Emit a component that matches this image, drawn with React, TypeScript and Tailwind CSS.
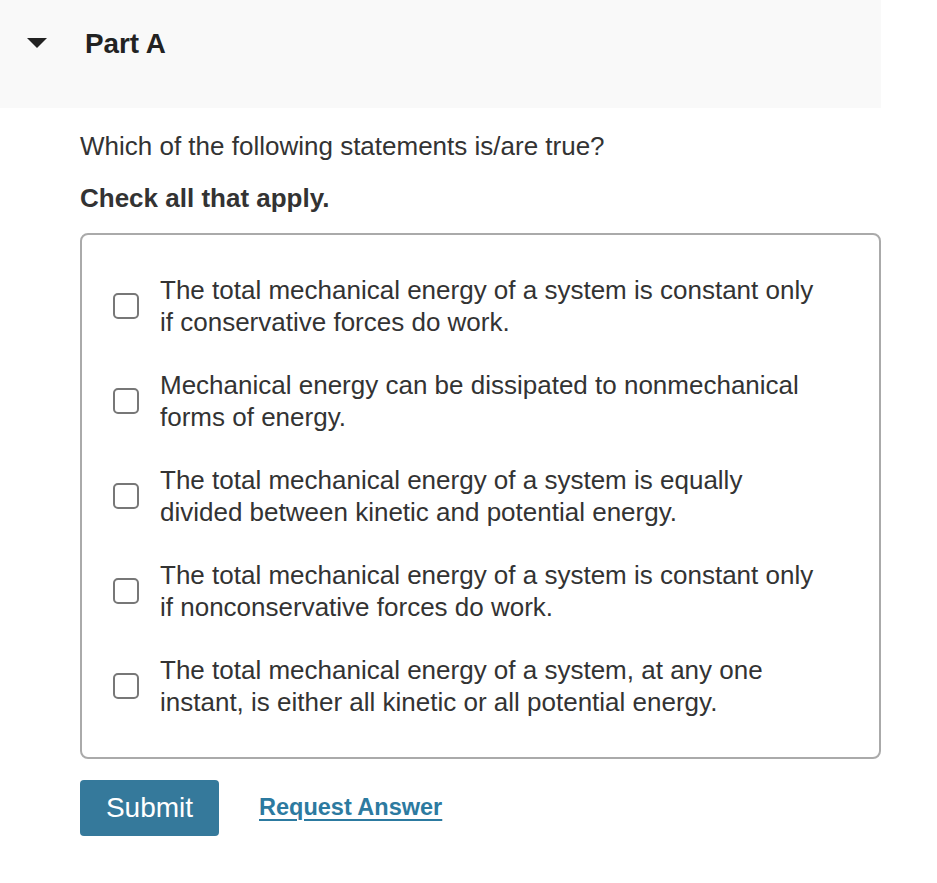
import React from "react";

const items = [
  ["The total mechanical energy of a system is constant only", "if conservative forces do work."],
  ["Mechanical energy can be dissipated to nonmechanical", "forms of energy."],
  ["The total mechanical energy of a system is equally", "divided between kinetic and potential energy."],
  ["The total mechanical energy of a system is constant only", "if nonconservative forces do work."],
  ["The total mechanical energy of a system, at any one", "instant, is either all kinetic or all potential energy."],
];

export default function App() {
  return (
    <div className="w-[937px] h-[883px] bg-white text-[#333]" style={{ fontFamily: '"Liberation Sans", Arial, sans-serif' }}>
      <div className="w-[881px] h-[108px] bg-[#f9f9f9] flex items-center">
        <svg width="20" height="11" viewBox="0 0 20 11" className="ml-[27px] mt-[-22px]">
          <polygon points="0,0 20,0 10,10" fill="#222" />
        </svg>
        <div className="ml-[38px] mt-[-20px] text-[27.8px] leading-[32px] font-bold text-[#222]">Part A</div>
      </div>
      <div className="pl-[80px] w-[881px]">
        <div className="mt-[24px] text-[26px] leading-[28px]">Which of the following statements is/are true?</div>
        <div className="mt-[24px] text-[26px] leading-[28px] font-bold">Check all that apply.</div>
        <div className="mt-[21px] border-2 border-[#aaa] rounded-[8px] h-[526px] pt-[39px] flex flex-col gap-[31px]">
          {items.map((it, i) => (
            <label key={i} className="flex items-center">
              <span className="ml-[31px] w-[26px] h-[26px] border-2 border-[#777] rounded-[5px] bg-white shrink-0" />
              <span className="ml-[21px] text-[26px] leading-[32px]">
                {it[0]}
                <br />
                {it[1]}
              </span>
            </label>
          ))}
        </div>
        <div className="mt-[21px] flex items-center">
          <button className="w-[139px] h-[56px] bg-[#35799b] rounded-[4px] text-white text-[28px]">Submit</button>
          <a className="ml-[40px] text-[23.5px] font-bold text-[#2c7aa0] underline underline-offset-[4px] decoration-2">Request Answer</a>
        </div>
      </div>
    </div>
  );
}
